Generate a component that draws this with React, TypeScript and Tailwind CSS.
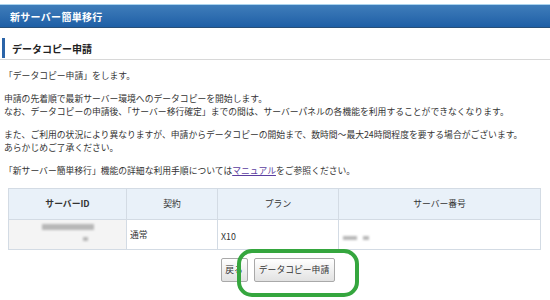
import React from 'react'

const font = { fontFamily: '"Noto Sans CJK JP", "Noto Sans", sans-serif' }

function Blur({ w, h = 6 }: { w: number; h?: number }) {
  return (
    <span
      className="inline-block bg-[#b8b8b8] blur-[1.2px] align-middle"
      style={{ width: w, height: h }}
    />
  )
}

export default function App() {
  return (
    <div className="relative w-[550px] h-[300px] overflow-hidden bg-white text-[#333]" style={font}>
      {/* Title bar */}
      <div className="mt-[4px] h-[24px] flex items-center px-[10px] bg-gradient-to-b from-[#3f7dba] to-[#1e5fa6] border-t border-t-[#a9d3ee] border-b border-b-[#274f78]">
        <span className="text-white font-bold text-[10px] tracking-[0.3px]">新サーバー簡単移行</span>
      </div>

      {/* Section heading */}
      <div className="mt-[10px] border-b border-[#d8d8d8]">
        <div className="ml-[2px] mb-[1px] h-[20px] flex items-center border-l-[3px] border-[#2b64a8] pl-[7px]">
          <span className="font-bold text-[10px] text-[#222]">データコピー申請</span>
        </div>
      </div>

      <div className="px-[4px] text-[8.8px] leading-[13px]">
        <p className="mt-[9px]">「データコピー申請」をします。</p>
        <p className="mt-[10px]">
          申請の先着順で最新サーバー環境へのデータコピーを開始します。
          <br />
          なお、データコピーの申請後、「サーバー移行確定」までの間は、サーバーパネルの各機能を利用することができなくなります。
        </p>
        <p className="mt-[10px]">
          また、ご利用の状況により異なりますが、申請からデータコピーの開始まで、数時間～最大24時間程度を要する場合がございます。
          <br />
          あらかじめご了承ください。
        </p>
        <p className="mt-[10px]">
          「新サーバー簡単移行」機能の詳細な利用手順については
          <span className="text-[#5b3ea0] underline">マニュアル</span>
          をご参照ください。
        </p>
      </div>

      {/* Table */}
      <div className="mx-[8px] mt-[11px] w-[533px] text-[8.8px]">
        <div className="grid grid-cols-[118px_91px_121px_1fr] border border-[#d3dbe4]">
          <div className="h-[30px] flex items-center justify-center bg-[#e9f1f9] border-r border-[#d3dbe4] font-bold">サーバーID</div>
          <div className="h-[30px] flex items-center justify-center bg-[#e9f1f9] border-r border-[#d3dbe4]">契約</div>
          <div className="h-[30px] flex items-center justify-center bg-[#e9f1f9] border-r border-[#d3dbe4]">プラン</div>
          <div className="h-[30px] flex items-center justify-center bg-[#e9f1f9]">サーバー番号</div>

          <div className="h-[30px] flex flex-col items-center justify-center gap-[1px] bg-[#f4f4f4] border-t border-r border-[#d3dbe4]">
            <Blur w={52} />
            <span className="pl-[36px]"><Blur w={5} h={4} /></span>
          </div>
          <div className="h-[30px] flex items-center pl-[3px] border-t border-r border-[#d3dbe4]">通常</div>
          <div className="h-[30px] flex items-center pl-[3px] pt-[5px] border-t border-r border-[#d3dbe4]">X10</div>
          <div className="h-[30px] flex items-center pl-[4px] pt-[6px] gap-[6px] border-t border-[#d3dbe4]">
            <Blur w={14} h={4} />
            <Blur w={6} h={4} />
          </div>
        </div>
      </div>

      {/* Buttons */}
      <div className="mt-[8px] flex justify-center gap-[6px] pl-[5px] text-[8.8px]">
        <button className="h-[24px] w-[27px] rounded-[2px] border border-[#a9a9a9] bg-gradient-to-b from-white to-[#e2e2e2] text-[#333]">戻る</button>
        <button className="h-[24px] w-[81px] rounded-[2px] border border-[#a9a9a9] bg-gradient-to-b from-white to-[#e2e2e2] text-[#333]">データコピー申請</button>
      </div>

      {/* Green annotation */}
      <div className="absolute left-[237px] top-[249px] w-[122px] h-[48px] rounded-[15px] border-[4px] border-[#35a63e]" />
    </div>
  )
}
